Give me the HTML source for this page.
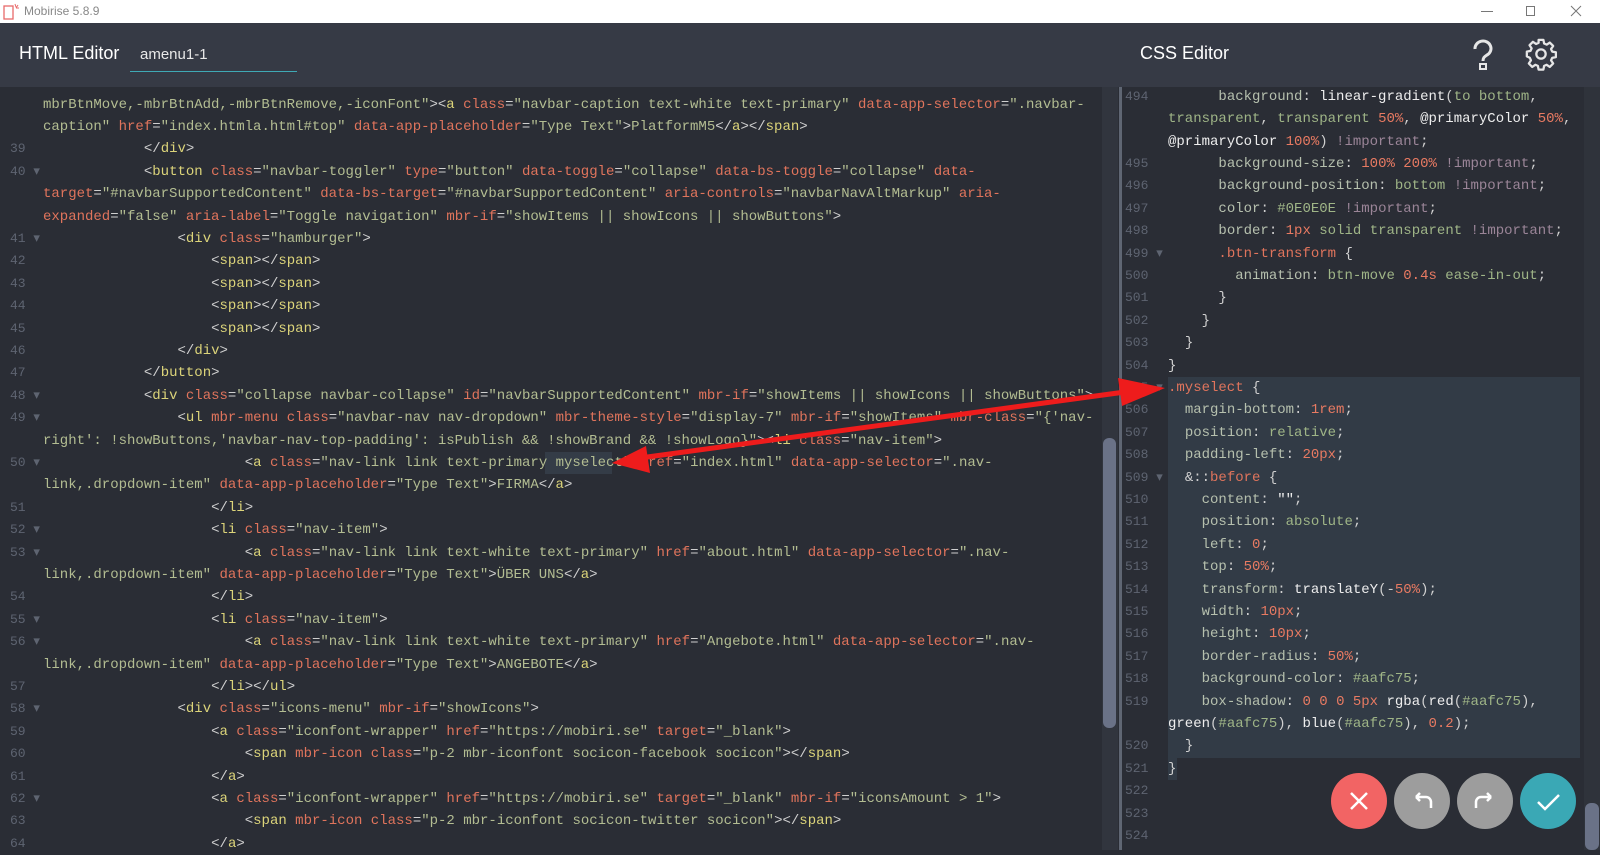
<!DOCTYPE html>
<html><head><meta charset="utf-8">
<style>
*{margin:0;padding:0;box-sizing:border-box}
body{width:1600px;height:850px;overflow:hidden;background:#2a2d35;font-family:"Liberation Sans",sans-serif;position:relative}
#title{position:absolute;left:0;top:0;width:1600px;height:23px;background:#fff;color:#888;font-size:12px}
#hdr{position:absolute;left:0;top:23px;width:1600px;height:64px;background:#363a45}
.code{position:absolute;font-family:"Liberation Mono",monospace;font-size:14px;white-space:pre;line-height:22.4px;color:#d6d6d6}
.ln{position:absolute;font-family:"Liberation Mono",monospace;font-size:13px;color:#5e6471;line-height:22.4px;white-space:pre}
.t{color:#dcd47a}.a{color:#e0745c}.s{color:#b3bd92}.p{color:#d0d0d0}
.pr{color:#b6c0ae}.n{color:#e87a62}.im{color:#9b8598}.f{color:#eeeeee}.v{color:#9fb587}.sel{color:#e0745c}
.btn{position:absolute;width:56px;height:56px;border-radius:50%;top:773px}
</style></head><body>
<div id="title">
<svg style="position:absolute;left:2px;top:2px" width="20" height="20" viewBox="0 0 20 20"><rect x="2" y="4" width="9" height="13" fill="none" stroke="#e86a6a" stroke-width="1.3"/><path d="M13 2l1 3M16 3l-2 3M17 6h-3" stroke="#e86a6a" stroke-width="1"/></svg>
<span style="position:absolute;left:24px;top:4px">Mobirise 5.8.9</span>
<div style="position:absolute;left:1481px;top:11px;width:12px;height:1px;background:#777"></div>
<div style="position:absolute;left:1526px;top:6px;width:9px;height:10px;border:1px solid #777"></div>
<svg style="position:absolute;left:1570px;top:5px" width="12" height="12"><path d="M1 1l10 10M11 1L1 11" stroke="#777" stroke-width="1"/></svg>
</div>
<div id="hdr">
<div style="position:absolute;left:19px;top:20px;color:#fff;font-size:18px">HTML Editor</div>
<div style="position:absolute;left:140px;top:23px;color:#e8e8e8;font-size:15px">amenu1-1</div>
<div style="position:absolute;left:130px;top:48px;width:167px;height:1px;background:#3fa9b5"></div>
<div style="position:absolute;left:1140px;top:20px;color:#fff;font-size:18px">CSS Editor</div>
<svg style="position:absolute;left:1470px;top:16px" width="26" height="32" viewBox="0 0 26 32"><path d="M5 10a8 7.5 0 1 1 12 6c-3 2-4 3-4 6" fill="none" stroke="#e6e6e6" stroke-width="3"/><rect x="10" y="25" width="6" height="5" fill="none" stroke="#e6e6e6" stroke-width="2"/></svg>
<svg style="position:absolute;left:1524px;top:14px" width="34" height="34" viewBox="0 0 24 24"><path d="M10.3 2h3.4l.5 2.6 1.8.8 2.2-1.5 2.4 2.4-1.5 2.2.8 1.8 2.6.5v3.4l-2.6.5-.8 1.8 1.5 2.2-2.4 2.4-2.2-1.5-1.8.8-.5 2.6h-3.4l-.5-2.6-1.8-.8-2.2 1.5-2.4-2.4 1.5-2.2-.8-1.8L2 13.7v-3.4l2.6-.5.8-1.8-1.5-2.2 2.4-2.4 2.2 1.5 1.8-.8z" fill="none" stroke="#e6e6e6" stroke-width="1.6" stroke-linejoin="round"/><circle cx="12" cy="12" r="3.3" fill="none" stroke="#e6e6e6" stroke-width="1.6"/></svg>
</div>
<!-- left scrollbar -->
<div style="position:absolute;left:1102px;top:87px;width:16px;height:763px;background:#31353e"></div>
<div style="position:absolute;left:1103px;top:438px;width:13px;height:290px;border-radius:6px;background:#6a7287"></div>
<div style="position:absolute;left:1119px;top:87px;width:3px;height:763px;background:#5f6673"></div>
<!-- right scrollbar -->
<div style="position:absolute;left:1584px;top:87px;width:16px;height:763px;background:#2f333b"></div>
<div style="position:absolute;left:1585px;top:803px;width:14px;height:47px;border-radius:6px;background:#6a7287"></div>
<!-- css selection -->
<div style="position:absolute;left:1168px;top:377px;width:412px;height:381px;background:#323b46"></div>
<div style="position:absolute;left:1168px;top:758px;width:9px;height:22px;background:#323b46"></div>
<!-- myselect highlight -->
<div style="position:absolute;left:545px;top:452px;width:67px;height:22px;background:#343c47"></div>
<div id="L"></div><div id="R"></div>
<!-- buttons -->
<div class="btn" style="left:1331px;background:#f26464"><svg width="56" height="56"><path d="M20 20l16 16M36 20L20 36" stroke="#fff" stroke-width="2.5"/></svg></div>
<div class="btn" style="left:1394px;background:#9d9d9d"><svg width="56" height="56"><path d="M22 24h10a5 5 0 0 1 5 5v6M22 24l4-4M22 24l4 4" fill="none" stroke="#fff" stroke-width="2.5"/></svg></div>
<div class="btn" style="left:1457px;background:#9d9d9d"><svg width="56" height="56"><path d="M34 24H24a5 5 0 0 0-5 5v6M34 24l-4-4M34 24l-4 4" fill="none" stroke="#fff" stroke-width="2.5"/></svg></div>
<div class="btn" style="left:1520px;background:#3aa8b5"><svg width="56" height="56"><path d="M18 29l7 7 14-14" fill="none" stroke="#fff" stroke-width="2.5"/></svg></div>
<!-- arrow -->
<svg style="position:absolute;left:0;top:0" width="1600" height="850"><line x1="640" y1="458" x2="1125" y2="392" stroke="#ee1c1c" stroke-width="5"/><polygon points="1165,388 1118,378 1122,406" fill="#ee1c1c"/><polygon points="612,463 646,446 650,473" fill="#ee1c1c"/></svg>
<script>
function esc(s){return s.replace(/&/g,'&amp;').replace(/</g,'&lt;').replace(/>/g,'&gt;')}
function hl(s,inTag){
 var o='',i=0;
 while(i<s.length){
  var c=s[i];
  if(c=='<'){var m=s.slice(i).match(/^<\/?([\w-]*)/);o+='<span class="p">'+esc(m[0].slice(0,m[0].length-m[1].length))+'</span><span class="t">'+m[1]+'</span>';i+=m[0].length;inTag=true;continue}
  if(c=='>'){o+='<span class="p">&gt;</span>';i++;inTag=false;continue}
  if(c=='"'){var j=s.indexOf('"',i+1);if(j<0)j=s.length-1;o+='<span class="s">'+esc(s.slice(i,j+1))+'</span>';i=j+1;continue}
  if(inTag&&/[\w-]/.test(c)){var m2=s.slice(i).match(/^[\w-]+/);o+='<span class="a">'+m2[0]+'</span>';i+=m2[0].length;continue}
  o+='<span class="'+(inTag?'p':'s')+'">'+esc(c)+'</span>';i++;
 }
 return o;
}
function hlCont(s){var j=s.indexOf('"');return '<span class="s">'+esc(s.slice(0,j+1))+'</span>'+hl(s.slice(j+1),true)}
var sp=function(n){return ' '.repeat(n)};
var L=[
['','s','mbrBtnMove,-mbrBtnAdd,-mbrBtnRemove,-iconFont"><a class="navbar-caption text-white text-primary" data-app-selector=".navbar-'],
['','s','caption" href="index.htmla.html#top" data-app-placeholder="Type Text">PlatformM5</a></span>'],
['39','',sp(12)+'</div>'],
['40 ▾','',sp(12)+'<button class="navbar-toggler" type="button" data-toggle="collapse" data-bs-toggle="collapse" data-'],
['','t','target="#navbarSupportedContent" data-bs-target="#navbarSupportedContent" aria-controls="navbarNavAltMarkup" aria-'],
['','t','expanded="false" aria-label="Toggle navigation" mbr-if="showItems || showIcons || showButtons">'],
['41 ▾','',sp(16)+'<div class="hamburger">'],
['42','',sp(20)+'<span></span>'],
['43','',sp(20)+'<span></span>'],
['44','',sp(20)+'<span></span>'],
['45','',sp(20)+'<span></span>'],
['46','',sp(16)+'</div>'],
['47','',sp(12)+'</button>'],
['48 ▾','',sp(12)+'<div class="collapse navbar-collapse" id="navbarSupportedContent" mbr-if="showItems || showIcons || showButtons">'],
['49 ▾','',sp(16)+'<ul mbr-menu class="navbar-nav nav-dropdown" mbr-theme-style="display-7" mbr-if="showItems" mbr-class="{\'nav-'],
['','s','right\': !showButtons,\'navbar-nav-top-padding\': isPublish && !showBrand && !showLogo}"><li class="nav-item">'],
['50 ▾','',sp(24)+'<a class="nav-link link text-primary myselect" href="index.html" data-app-selector=".nav-'],
['','s','link,.dropdown-item" data-app-placeholder="Type Text">FIRMA</a>'],
['51','',sp(20)+'</li>'],
['52 ▾','',sp(20)+'<li class="nav-item">'],
['53 ▾','',sp(24)+'<a class="nav-link link text-white text-primary" href="about.html" data-app-selector=".nav-'],
['','s','link,.dropdown-item" data-app-placeholder="Type Text">ÜBER UNS</a>'],
['54','',sp(20)+'</li>'],
['55 ▾','',sp(20)+'<li class="nav-item">'],
['56 ▾','',sp(24)+'<a class="nav-link link text-white text-primary" href="Angebote.html" data-app-selector=".nav-'],
['','s','link,.dropdown-item" data-app-placeholder="Type Text">ANGEBOTE</a>'],
['57','',sp(20)+'</li></ul>'],
['58 ▾','',sp(16)+'<div class="icons-menu" mbr-if="showIcons">'],
['59','',sp(20)+'<a class="iconfont-wrapper" href="https://mobiri.se" target="_blank">'],
['60','',sp(24)+'<span mbr-icon class="p-2 mbr-iconfont socicon-facebook socicon"></span>'],
['61','',sp(20)+'</a>'],
['62 ▾','',sp(20)+'<a class="iconfont-wrapper" href="https://mobiri.se" target="_blank" mbr-if="iconsAmount > 1">'],
['63','',sp(24)+'<span mbr-icon class="p-2 mbr-iconfont socicon-twitter socicon"></span>'],
['64','',sp(20)+'</a>']
];
var h='';
L.forEach(function(r,k){
 var y=93.5+22.4*k;
 if(r[0])h+='<div class="ln" style="left:10px;top:'+y+'px">'+r[0]+'</div>';
 var html=r[1]=='s'?hlCont(r[2]):r[1]=='t'?hl(r[2],true):hl(r[2],false);
 h+='<div class="code" style="left:43px;top:'+y+'px">'+html+'</div>';
});
document.getElementById('L').innerHTML=h;
function hlCss(s){
 var m=s.match(/^(\s*)(.*)$/);var ind=m[1],b=m[2],o=ind;
 if(/\{\s*$/.test(b)){return o+'<span class="sel">'+esc(b.replace(/\s*\{$/,''))+'</span> <span class="p">{</span>'}
 var pm=b.match(/^([\w-]+)(:)(.*)$/);var rest=b;
 if(pm){o+='<span class="pr">'+pm[1]+'</span><span class="p">:</span>';rest=pm[3]}
 var re=/(!important)|(#[0-9a-fA-F]+)|([\w-]+)(?=\()|(\d+\.?\d*(?:%|px|rem|s)?)(?![\w])|(@?[A-Za-z][\w-]*)|("[^"]*")|(.)/g,x;
 while((x=re.exec(rest))){
  if(x[1])o+='<span class="im">'+x[1]+'</span>';
  else if(x[2])o+='<span class="v">'+x[2]+'</span>';
  else if(x[3])o+='<span class="f">'+x[3]+'</span>';
  else if(x[4])o+='<span class="n">'+x[4]+'</span>';
  else if(x[5])o+='<span class="'+(x[5][0]=='@'?'f':'v')+'">'+x[5]+'</span>';
  else if(x[6])o+='<span class="f">'+esc(x[6])+'</span>';
  else o+='<span class="p">'+esc(x[7])+'</span>';
 }
 return o;
}
var R=[
['494',sp(6)+'background: linear-gradient(to bottom,'],
['','transparent, transparent 50%, @primaryColor 50%,'],
['','@primaryColor 100%) !important;'],
['495',sp(6)+'background-size: 100% 200% !important;'],
['496',sp(6)+'background-position: bottom !important;'],
['497',sp(6)+'color: #0E0E0E !important;'],
['498',sp(6)+'border: 1px solid transparent !important;'],
['499 ▾',sp(6)+'.btn-transform {'],
['500',sp(8)+'animation: btn-move 0.4s ease-in-out;'],
['501',sp(6)+'}'],
['502',sp(4)+'}'],
['503',sp(2)+'}'],
['504','}'],
['505 ▾','.myselect {'],
['506',sp(2)+'margin-bottom: 1rem;'],
['507',sp(2)+'position: relative;'],
['508',sp(2)+'padding-left: 20px;'],
['509 ▾',sp(2)+'&::before {'],
['510',sp(4)+'content: "";'],
['511',sp(4)+'position: absolute;'],
['512',sp(4)+'left: 0;'],
['513',sp(4)+'top: 50%;'],
['514',sp(4)+'transform: translateY(-50%);'],
['515',sp(4)+'width: 10px;'],
['516',sp(4)+'height: 10px;'],
['517',sp(4)+'border-radius: 50%;'],
['518',sp(4)+'background-color: #aafc75;'],
['519',sp(4)+'box-shadow: 0 0 0 5px rgba(red(#aafc75),'],
['','green(#aafc75), blue(#aafc75), 0.2);'],
['520',sp(2)+'}'],
['521','}'],
['522',''],['523',''],['524','']
];
h='';
R.forEach(function(r,k){
 var y=85.8+22.4*k;
 if(r[0])h+='<div class="ln" style="left:1125px;top:'+y+'px">'+r[0]+'</div>';
 var c=r[1];
 var out=(c.trim()=='}'?esc(c).replace('}','<span class="p">}</span>'):hlCss(c));
 if(k==17)out=sp(2)+'<span class="p">&amp;::</span><span class="sel">before</span> <span class="p">{</span>';
 h+='<div class="code" style="left:1168px;top:'+y+'px">'+out+'</div>';
});
document.getElementById('R').innerHTML=h;
</script>
</body></html>
